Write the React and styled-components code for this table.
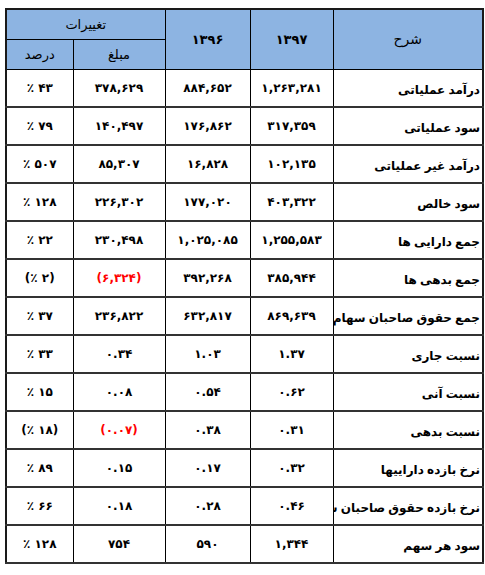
import React from "react";
import styled, { createGlobalStyle } from "styled-components";

const GlobalStyle = createGlobalStyle`
  html, body {
    margin: 0;
    padding: 0;
    background: #ffffff;
  }
  body {
    font-family: "DejaVu Sans", "Noto Sans", sans-serif;
    color: #000;
  }
`;

const rows = [
  { label: "درآمد عملیاتی", y97: "۱,۲۶۳,۲۸۱", y96: "۸۸۴,۶۵۲", amount: "۳۷۸,۶۲۹", pct: "٪ ۴۳" },
  { label: "سود عملیاتی", y97: "۳۱۷,۳۵۹", y96: "۱۷۶,۸۶۲", amount: "۱۴۰,۴۹۷", pct: "٪ ۷۹" },
  { label: "درآمد غیر عملیاتی", y97: "۱۰۲,۱۳۵", y96: "۱۶,۸۲۸", amount: "۸۵,۳۰۷", pct: "٪ ۵۰۷" },
  { label: "سود خالص", y97: "۴۰۳,۳۲۲", y96: "۱۷۷,۰۲۰", amount: "۲۲۶,۳۰۲", pct: "٪ ۱۲۸" },
  { label: "جمع دارایی ها", y97: "۱,۲۵۵,۵۸۳", y96: "۱,۰۲۵,۰۸۵", amount: "۲۳۰,۴۹۸", pct: "٪ ۲۲" },
  { label: "جمع بدهی ها", y97: "۳۸۵,۹۴۴", y96: "۳۹۲,۲۶۸", amount: "(۶,۳۲۴)", pct: "(٪ ۲)", negative: true },
  { label: "جمع حقوق صاحبان سهام", y97: "۸۶۹,۶۳۹", y96: "۶۳۲,۸۱۷", amount: "۲۳۶,۸۲۲", pct: "٪ ۳۷" },
  { label: "نسبت جاری", y97: "۱.۳۷", y96: "۱.۰۳", amount: "۰.۳۴", pct: "٪ ۳۳" },
  { label: "نسبت آنی", y97: "۰.۶۲", y96: "۰.۵۴", amount: "۰.۰۸", pct: "٪ ۱۵" },
  { label: "نسبت بدهی", y97: "۰.۳۱", y96: "۰.۳۸", amount: "(۰.۰۷)", pct: "(٪ ۱۸)", negative: true },
  { label: "نرخ بازده داراییها", y97: "۰.۳۲", y96: "۰.۱۷", amount: "۰.۱۵", pct: "٪ ۸۹" },
  { label: "نرخ بازده حقوق صاحبان سهام", y97: "۰.۴۶", y96: "۰.۲۸", amount: "۰.۱۸", pct: "٪ ۶۶" },
  { label: "سود هر سهم", y97: "۱,۳۴۴", y96: "۵۹۰", amount: "۷۵۴", pct: "٪ ۱۲۸" },
];

export default function App() {
  return (
    <Page>
      <GlobalStyle />
      <Table dir="rtl">
        <colgroup>
          <col style={{ width: 150 }} />
          <col style={{ width: 83 }} />
          <col style={{ width: 85 }} />
          <col style={{ width: 92 }} />
          <col style={{ width: 67 }} />
        </colgroup>
        <thead>
          <HeadRow>
            <HeadCell rowSpan={2} $size={14}>شرح</HeadCell>
            <HeadCell rowSpan={2} $bold>۱۳۹۷</HeadCell>
            <HeadCell rowSpan={2} $bold>۱۳۹۶</HeadCell>
            <HeadCell colSpan={2}>تغییرات</HeadCell>
          </HeadRow>
          <HeadRow>
            <HeadCell>مبلغ</HeadCell>
            <HeadCell>درصد</HeadCell>
          </HeadRow>
        </thead>
        <tbody>
          {rows.map((r) => (
            <DataRow key={r.label}>
              <LabelCell>{r.label}</LabelCell>
              <NumCell><Num>{r.y97}</Num></NumCell>
              <NumCell><Num>{r.y96}</Num></NumCell>
              <NumCell $red={r.negative}><Num>{r.amount}</Num></NumCell>
              <NumCell><Num>{r.pct}</Num></NumCell>
            </DataRow>
          ))}
        </tbody>
      </Table>
    </Page>
  );
}

const Page = styled.div`
  padding: 8px 0 0 5px;
  width: 485px;
  box-sizing: border-box;
`;

const Table = styled.table`
  width: 477px;
  table-layout: fixed;
  border-collapse: collapse;
  border: 2px solid #1a1a1a;
`;

const HeadRow = styled.tr`
  height: 30px;
`;

const HeadCell = styled.th`
  background: #8db4e2;
  border: 1px solid #000;
  font-size: ${(p) => p.$size || 13}px;
  font-weight: ${(p) => (p.$bold ? 700 : 400)};
  text-align: center;
  vertical-align: middle;
  padding: 0;
`;

const DataRow = styled.tr`
  height: 38px;
`;

const LabelCell = styled.td`
  border: 1px solid #000;
  border-bottom: 2px solid #333;
  font-size: 12px;
  font-weight: 700;
  word-spacing: -1px;
  text-align: right;
  vertical-align: middle;
  padding: 4px 2px 0 0;
  white-space: nowrap;
  overflow: hidden;
`;

const NumCell = styled.td`
  border: 1px solid #000;
  border-bottom: 2px solid #333;
  font-size: 12px;
  font-weight: 700;
  text-align: center;
  vertical-align: middle;
  padding: 0;
  color: ${(p) => (p.$red ? "#ff0000" : "#000")};
`;

const Num = styled.span`
  direction: ltr;
  unicode-bidi: bidi-override;
  white-space: nowrap;
`;
